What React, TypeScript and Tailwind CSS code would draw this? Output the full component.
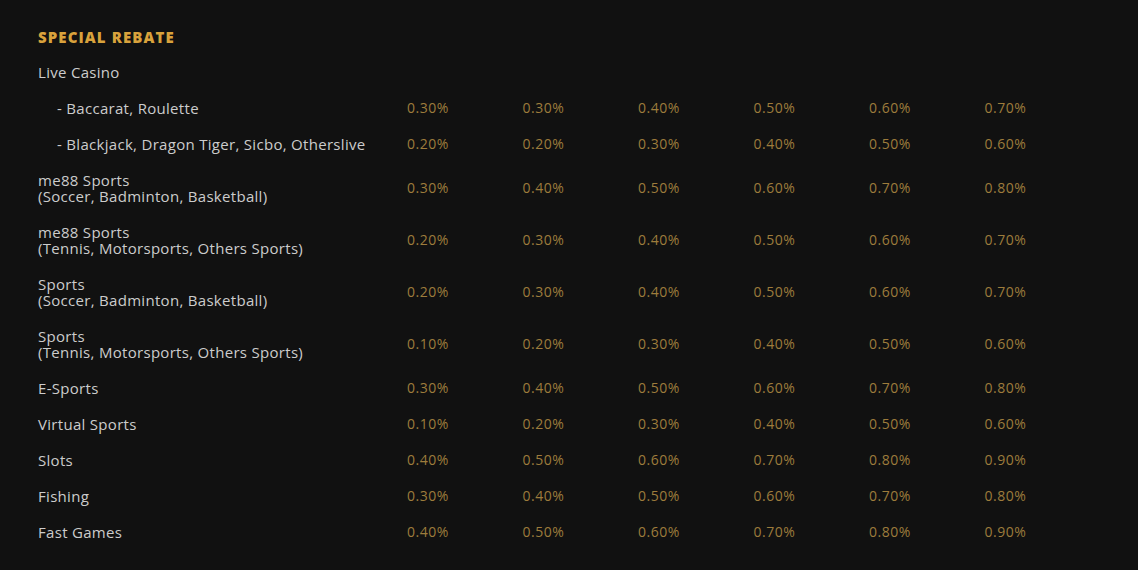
import React from 'react';

interface RebateRow {
    id: string;
    label: string[];
    indent?: boolean;
    rates: string[];
}

const rows: RebateRow[] = [
    { id: 'live', label: ['Live Casino'], rates: [] },
    { id: 'baccarat', label: ['- Baccarat, Roulette'], indent: true, rates: ['0.30%', '0.30%', '0.40%', '0.50%', '0.60%', '0.70%'] },
    { id: 'blackjack', label: ['- Blackjack, Dragon Tiger, Sicbo, Otherslive'], indent: true, rates: ['0.20%', '0.20%', '0.30%', '0.40%', '0.50%', '0.60%'] },
    { id: 'me88-a', label: ['me88 Sports', '(Soccer, Badminton, Basketball)'], rates: ['0.30%', '0.40%', '0.50%', '0.60%', '0.70%', '0.80%'] },
    { id: 'me88-b', label: ['me88 Sports', '(Tennis, Motorsports, Others Sports)'], rates: ['0.20%', '0.30%', '0.40%', '0.50%', '0.60%', '0.70%'] },
    { id: 'sports-a', label: ['Sports', '(Soccer, Badminton, Basketball)'], rates: ['0.20%', '0.30%', '0.40%', '0.50%', '0.60%', '0.70%'] },
    { id: 'sports-b', label: ['Sports', '(Tennis, Motorsports, Others Sports)'], rates: ['0.10%', '0.20%', '0.30%', '0.40%', '0.50%', '0.60%'] },
    { id: 'esports', label: ['E-Sports'], rates: ['0.30%', '0.40%', '0.50%', '0.60%', '0.70%', '0.80%'] },
    { id: 'virtual', label: ['Virtual Sports'], rates: ['0.10%', '0.20%', '0.30%', '0.40%', '0.50%', '0.60%'] },
    { id: 'slots', label: ['Slots'], rates: ['0.40%', '0.50%', '0.60%', '0.70%', '0.80%', '0.90%'] },
    { id: 'fishing', label: ['Fishing'], rates: ['0.30%', '0.40%', '0.50%', '0.60%', '0.70%', '0.80%'] },
    { id: 'fast', label: ['Fast Games'], rates: ['0.40%', '0.50%', '0.60%', '0.70%', '0.80%', '0.90%'] },
];

const App: React.FC = () => {
    return (
        <div className="min-h-[570px] w-full bg-[#111111] px-[38px] pt-[27px] font-['Open_Sans','Lato',sans-serif]">
            {/* Heading */}
            <h2 className="text-[15px] leading-5 font-extrabold uppercase tracking-[1.1px] text-[#d9a23c]">
                Special Rebate
            </h2>

            {/* Rebate table */}
            <div className="mt-[7px] flex flex-col">
                {rows.map((row) => (
                    <div key={row.id} className="grid grid-cols-[369px_repeat(6,1fr)] items-center py-[10px]">
                        <div className={`text-[15px] leading-4 tracking-[0.3px] text-[#cccccc] ${row.indent ? 'pl-[19px]' : ''}`}>
                            {row.label.map((line) => (
                                <div key={line}>{line}</div>
                            ))}
                        </div>
                        {row.rates.map((rate, i) => (
                            <div key={i} className="text-[14px] leading-4 tracking-[0.5px] text-[#9d7c3c]">
                                {rate}
                            </div>
                        ))}
                    </div>
                ))}
            </div>
        </div>
    );
};

export default App;
